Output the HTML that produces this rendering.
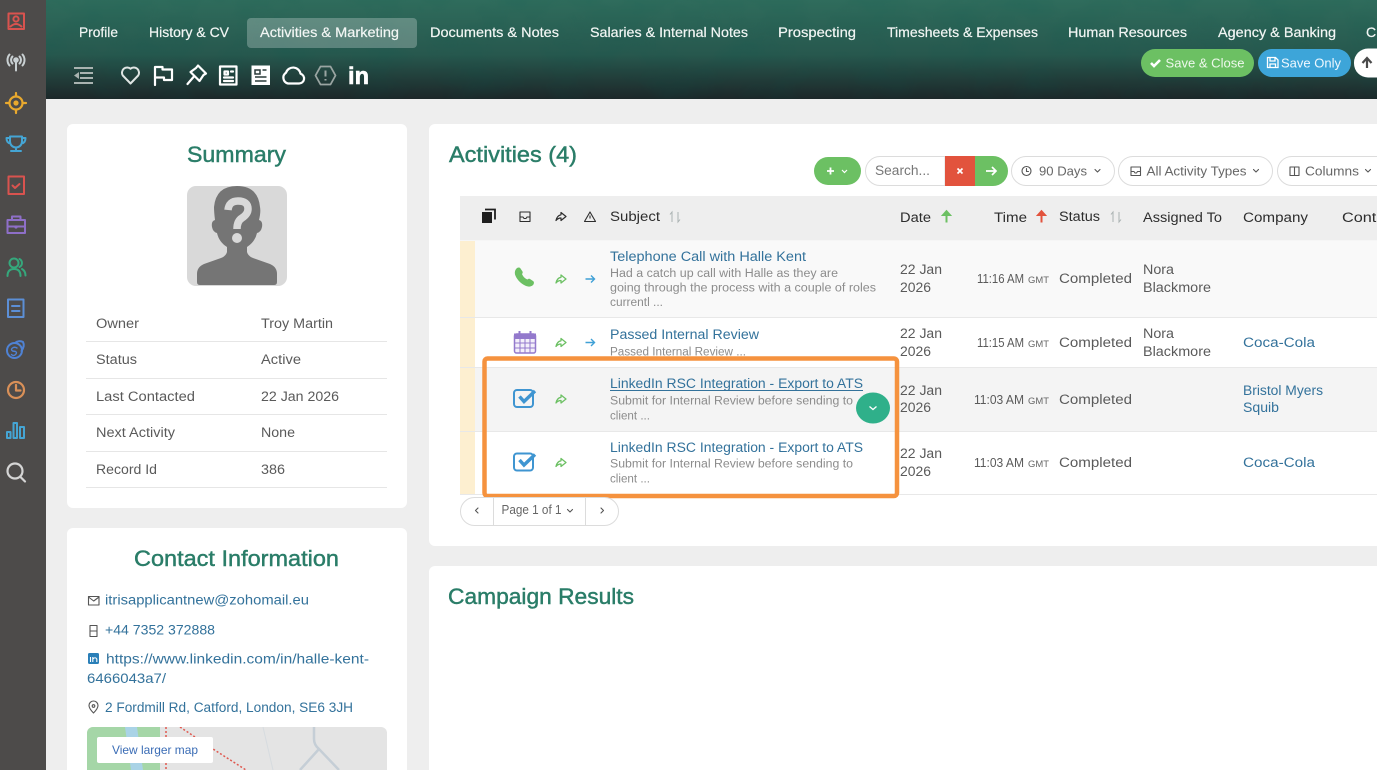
<!DOCTYPE html>
<html lang="en"><head><meta charset="utf-8"><title>Activities</title>
<style>
html,body{margin:0;padding:0;background:#eee;overflow:hidden;width:1377px;height:770px}
svg{display:block;font-family:"Liberation Sans",sans-serif}
.tab{font-size:14px;fill:#f2f6f4;stroke:#f2f6f4;stroke-width:.2}
.lab{font-size:13.5px;fill:#5a5a5a}
.val{font-size:13.5px;fill:#5a5a5a}
.h{font-size:22px;fill:#2a7d68;font-weight:400;stroke:#2a7d68;stroke-width:.45}
.lnk{font-size:13.5px;fill:#33729b}
.sub{font-size:11.5px;fill:#8c8c8c}
.th{font-size:13.5px;fill:#2d2d2d}
.tb{font-size:12.5px;fill:#666}
.tm{font-size:12.5px}
.ic{fill:none;stroke-width:2;stroke-linecap:round;stroke-linejoin:round}
.w{stroke:#fff;fill:none;stroke-width:2.2;stroke-linejoin:round;stroke-linecap:round}
.sg{stroke:#555;fill:none;stroke-width:1.1;stroke-linejoin:round;stroke-linecap:round}
</style></head><body>
<svg width="1377" height="770" viewBox="0 0 1377 770" xmlns="http://www.w3.org/2000/svg">
<defs>
<linearGradient id="hd" x1="0" y1="0" x2="0" y2="1"><stop offset="0" stop-color="#2f6c5c"/><stop offset=".55" stop-color="#27584e"/><stop offset="1" stop-color="#1d2729"/></linearGradient>
<filter id="nz" x="0" y="0" width="100%" height="100%"><feTurbulence type="fractalNoise" baseFrequency=".02 .03" numOctaves="3" seed="4"/><feColorMatrix values="0 0 0 0 0 0 0 0 0 .1 0 0 0 0 .08 0 0 0 1.1 -.42"/></filter>
</defs>
<rect width="1377" height="770" fill="#eeeeee"/>

<!-- header -->
<rect x="46" width="1331" height="99" fill="url(#hd)"/>
<rect x="46" width="1331" height="99" filter="url(#nz)" opacity=".22"/>
<rect x="247" y="18" width="170" height="30" rx="4" fill="#fff" fill-opacity=".25"/>
<g class="tab">
<text x="79" y="37" textLength="39" lengthAdjust="spacingAndGlyphs">Profile</text>
<text x="149" y="37" textLength="80" lengthAdjust="spacingAndGlyphs">History &amp; CV</text>
<text x="260" y="37" textLength="139" lengthAdjust="spacingAndGlyphs">Activities &amp; Marketing</text>
<text x="430" y="37" textLength="129" lengthAdjust="spacingAndGlyphs">Documents &amp; Notes</text>
<text x="590" y="37" textLength="158" lengthAdjust="spacingAndGlyphs">Salaries &amp; Internal Notes</text>
<text x="778" y="37" textLength="78" lengthAdjust="spacingAndGlyphs">Prospecting</text>
<text x="887" y="37" textLength="151" lengthAdjust="spacingAndGlyphs">Timesheets &amp; Expenses</text>
<text x="1068" y="37" textLength="119" lengthAdjust="spacingAndGlyphs">Human Resources</text>
<text x="1218" y="37" textLength="118" lengthAdjust="spacingAndGlyphs">Agency &amp; Banking</text>
<text x="1366" y="37">C</text>
</g>
<!-- toolbar icons -->
<path d="M74 68h19M80 73h13M80 78h13M74 83h19" stroke="#a9b3b0" stroke-width="2" fill="none"/>
<path d="M79 72l-5 3.500 5 3.500z" fill="#a9b3b0"/>
<path d="M130.500 83.500l-7.700-8a5.200 5.200 0 0 1 7.700-6.800 5.200 5.200 0 0 1 7.700 6.800z" fill="none" stroke="#dfe5e3" stroke-width="2" stroke-linejoin="round"/>
<path class="w" d="M155 85V67h7.500v2.500H172V80h-8v-2.500h-9"/>
<path class="w" d="M198 65.500l8 8-2.500 1.500-4 6-9-9 5.500-4zM193.500 77l-6 7"/>
<path class="w" d="M220 66.500h16.500v18H220zM224.500 71.500h3.500v3h-3.500zM231 71.500h2M224 77.500h9M224 81h9"/>
<rect x="251.500" y="65.500" width="18.500" height="19.500" fill="#fff"/>
<path d="M255 70h5v4h-5zM262.500 70h4M255 77h11.500M255 81h11.500" stroke="#2a3b3a" stroke-width="1.500" fill="none"/>
<path class="w" d="M288 83.500h11a5 5 0 0 0 1.500-9.800 7.500 7.500 0 0 0-14.500-1 6 6 0 0 0 2 10.800z"/>
<path d="M320.500 66.500h10l5 9-5 9h-10l-5-9z" fill="none" stroke="#9aa5a2" stroke-width="1.800" stroke-linejoin="round"/>
<path d="M325.500 70.500v6M325.500 79v1.500" stroke="#9aa5a2" stroke-width="2"/>
<text x="348" y="84" font-size="24" font-weight="700" fill="#fff" stroke="#fff" stroke-width=".6" textLength="21" lengthAdjust="spacingAndGlyphs">in</text>
<!-- save buttons -->
<rect x="1141" y="49" width="113" height="28" rx="14" fill="#6cc063"/>
<path d="M1151 63l3 3 6-6" stroke="#fff" stroke-width="2.600" fill="none"/>
<text x="1165.500" y="67.500" font-size="13" fill="#eef8ec" textLength="79" lengthAdjust="spacingAndGlyphs">Save &amp; Close</text>
<rect x="1258" y="49" width="93" height="28" rx="14" fill="#3da5d9"/>
<path d="M1267.500 57.500h8l2.500 2.500v7.500h-10.500zM1270 57.500v3.500h5v-3.500M1270 67.500v-3.500h5.500v3.500" fill="none" stroke="#fff" stroke-width="1.300"/>
<text x="1281" y="67.500" font-size="13" fill="#eef8ff" textLength="60" lengthAdjust="spacingAndGlyphs">Save Only</text>
<rect x="1354" y="48.500" width="40" height="29" rx="14" fill="#fff"/>
<path d="M1367 68v-10M1362.500 63l4.500-5 4.500 5" stroke="#4a4a4a" stroke-width="2.200" fill="none"/>

<!-- sidebar -->
<rect width="46" height="770" fill="#4d4b4a"/>
<g class="ic">
<g stroke="#d9534f"><rect x="8.500" y="13.500" width="15.500" height="15.500"/><circle cx="16" cy="19" r="2.600"/><path d="M10.500 26.500q5.500-5 11 0"/></g>
<g stroke="#c9d0d2"><circle cx="16" cy="60" r="1.800" fill="#c9d0d2"/><path d="M16 62v8.500M12.500 56.500a5 5 0 0 0 0 7M19.500 56.500a5 5 0 0 1 0 7M9.500 54.500a8.500 8.500 0 0 0 0 11M22.500 54.500a8.500 8.500 0 0 1 0 11"/></g>
<g stroke="#e9a92e" stroke-width="2.200"><circle cx="16" cy="103" r="6.500"/><circle cx="16" cy="103" r="1.500" fill="#e9a92e"/><path d="M16 93v3M16 110v3M6 103h3M23 103h3"/></g>
<g stroke="#45a5d4"><path d="M10 136.500h12v5a6 6 0 0 1-12 0zM10 138H6.500q0 5 4 5.500M22 138h3.500q0 5-4 5.500M16 147.500v2.500M11 151h10"/></g>
<g stroke="#d9534f"><rect x="8.500" y="176.500" width="15.500" height="17.500"/><path d="M12.500 185.500l2.500 2.500 4.500-4"/></g>
<g stroke="#8e6fc8"><rect x="7.500" y="220" width="17.500" height="13"/><path d="M12 220v-3.500h8.500v3.500M7.500 226.500h17.500"/><circle cx="16" cy="227" r=".6"/></g>
<g stroke="#35a87c"><circle cx="14" cy="263" r="4.500"/><path d="M7.500 276q0-7 6.500-7t6.500 7M19.500 259a4.500 4.500 0 0 1 0 8M22 269q3.500 2 3.500 6.500"/></g>
<g stroke="#5c8fd6"><rect x="8" y="299.500" width="15.500" height="17.500"/><path d="M12 306h7.500M12 311h7.500"/></g>
<g stroke="#4f82d4"><circle cx="14.500" cy="350.500" r="7.500"/><path d="M15 343a7 7 0 0 1 8-1q2 4-1.500 9"/><path stroke-width="1.400" d="M17 348q-2.500-1.500-4.500 0t0 3l3 .5q2 1 0 3t-4 0"/></g>
<g stroke="#d99058" stroke-width="2.200"><circle cx="16" cy="390" r="8"/><path d="M16 385v5.500h4.500"/></g>
<g stroke="#45a5d4"><rect x="7" y="432" width="3.500" height="6"/><rect x="13.500" y="423" width="3.500" height="15"/><rect x="20" y="427" width="4" height="11"/></g>
<g stroke="#d5d5d5" stroke-width="2.200"><circle cx="15" cy="471" r="7.500"/><path d="M20.500 477l4.500 4.500"/></g>
</g>

<!-- left cards -->
<rect x="67" y="124" width="340" height="384" rx="6" fill="#fff"/>
<text class="h" x="187" y="162" textLength="99" lengthAdjust="spacingAndGlyphs">Summary</text>
<rect x="187" y="186" width="100" height="100" rx="9" fill="#d9d9d9"/>
<path d="M200 285q-3 0-3-3v-8q0-7 7-10l17-6q5-2 6-6v-5q-8-5-10-14q-4-1-5-6q-1-6 3-7q-1-8-1-13q2-21 23-21t23 21q1 5-1 13q4 1 3 7q-1 5-5 6q-2 9-10 14v5q1 4 6 6l17 6q7 3 7 10v8q0 3-3 3z" fill="#757575"/>
<path d="M228 210q1-9 10-9q10 0 10 8q0 5-6 9q-5 3-5 11" fill="none" stroke="#d9d9d9" stroke-width="7.500"/>
<circle cx="237" cy="238" r="5" fill="#d9d9d9"/>
<g fill="none" stroke="#e6e6e6"><path d="M86 341.500h301M86 378.500h301M86 414.500h301M86 451.500h301M86 487.500h301"/></g>
<text class="lab" x="96" y="328" textLength="43" lengthAdjust="spacingAndGlyphs">Owner</text>
<text class="lab" x="96" y="364" textLength="41" lengthAdjust="spacingAndGlyphs">Status</text>
<text class="lab" x="96" y="401" textLength="99" lengthAdjust="spacingAndGlyphs">Last Contacted</text>
<text class="lab" x="96" y="437" textLength="79" lengthAdjust="spacingAndGlyphs">Next Activity</text>
<text class="lab" x="96" y="474" textLength="61" lengthAdjust="spacingAndGlyphs">Record Id</text>
<text class="val" x="261" y="328" textLength="72" lengthAdjust="spacingAndGlyphs">Troy Martin</text>
<text class="val" x="261" y="364" textLength="40" lengthAdjust="spacingAndGlyphs">Active</text>
<text class="val" x="261" y="401" textLength="78" lengthAdjust="spacingAndGlyphs">22 Jan 2026</text>
<text class="val" x="261" y="437" textLength="34" lengthAdjust="spacingAndGlyphs">None</text>
<text class="val" x="261" y="474" textLength="24" lengthAdjust="spacingAndGlyphs">386</text>

<rect x="67" y="528" width="340" height="260" rx="6" fill="#fff"/>
<text class="h" x="134" y="566" textLength="205" lengthAdjust="spacingAndGlyphs">Contact Information</text>
<rect x="88.500" y="596.500" width="10.500" height="8.500" class="sg" />
<path class="sg" d="M88.500 597l5.200 4 5.300-4"/>
<text class="lnk" x="105" y="604.500" textLength="204" lengthAdjust="spacingAndGlyphs">itrisapplicantnew@zohomail.eu</text>
<path class="sg" d="M90 625.500h7v11h-7zM90 631h7"/>
<text class="lnk" x="105" y="634.500" textLength="110" lengthAdjust="spacingAndGlyphs">+44 7352 372888</text>
<rect x="88" y="653" width="11" height="11" rx="1.500" fill="#2a7fb8"/>
<path d="M90.500 657v5M92.800 662v-5M92.800 659q2.500-2.500 4 0v3" stroke="#fff" stroke-width="1.100" fill="none"/>
<text class="lnk" x="106" y="663.500" textLength="263" lengthAdjust="spacingAndGlyphs">https://www.linkedin.com/in/halle-kent-</text>
<text class="lnk" x="87" y="683" textLength="79" lengthAdjust="spacingAndGlyphs">6466043a7/</text>
<path class="sg" d="M93.500 713q-4.500-4.500-4.500-7.500a4.500 4.500 0 0 1 9 0q0 3-4.500 7.500z"/>
<circle cx="93.500" cy="706" r="1.300" class="sg"/>
<text class="lnk" x="105" y="712" textLength="248" lengthAdjust="spacingAndGlyphs">2 Fordmill Rd, Catford, London, SE6 3JH</text>
<clipPath id="mp"><path d="M87 770v-37a6 6 0 0 1 6-6h288a6 6 0 0 1 6 6v37z"/></clipPath>
<g clip-path="url(#mp)">
<rect x="87" y="727" width="300" height="43" fill="#e4e4e4"/>
<path d="M87 727h73v43H87z" fill="#a5d6a7"/>
<path d="M125 727l6 43h12l-6-43z" fill="#a9d3e6"/>
<path d="M166 727v43M180 727l33 22 33 21" stroke="#e0584f" stroke-width="1.500" stroke-dasharray="2 2" fill="none"/>
<path d="M263 727l10 43" stroke="#d6dbdf" stroke-width="1" fill="none"/>
<path d="M314 727v12q0 6 5 10l20 21M300 770l19-21" stroke="#c5ced6" stroke-width="2.500" fill="none"/>
</g>
<rect x="97" y="737" width="116" height="26" rx="2" fill="#fff"/>
<text x="112" y="754" font-size="12" fill="#3a6cb5" textLength="86" lengthAdjust="spacingAndGlyphs">View larger map</text>

<!-- activities card -->
<rect x="429" y="124" width="960" height="422" rx="6" fill="#fff"/>
<text class="h" x="449" y="162" textLength="128" lengthAdjust="spacingAndGlyphs">Activities (4)</text>
<!-- toolbar -->
<rect x="814" y="157" width="47" height="28" rx="14" fill="#6cc063"/>
<path d="M827 171h7M830.500 167.500v7" stroke="#fff" stroke-width="1.800"/>
<path d="M842 170l2.500 2.500 2.500-2.500" stroke="#fff" stroke-width="1.200" fill="none"/>
<path d="M945 156.500h-65a14.500 14.500 0 0 0 0 29h65z" fill="#fff" stroke="#dcdcdc"/>
<text x="875" y="175" textLength="55" lengthAdjust="spacingAndGlyphs" style="font-size:13.500px;fill:#777">Search...</text>
<rect x="945" y="156" width="30" height="30" fill="#e2533d"/>
<path d="M957.500 168.500l5 5M962.500 168.500l-5 5" stroke="#fff" stroke-width="1.700"/>
<path d="M975 156h18a15 15 0 0 1 0 30h-18z" fill="#6cc063"/>
<path d="M986 171h10M992 167l4 4-4 4" stroke="#fff" stroke-width="1.700" fill="none"/>
<rect x="1011.500" y="156.500" width="103" height="29" rx="14.500" fill="#fff" stroke="#dcdcdc"/>
<circle cx="1026.500" cy="171" r="4.500" class="sg"/><path class="sg" d="M1026.500 168.500v3h2"/>
<text class="tb" x="1039" y="175.500" textLength="48" lengthAdjust="spacingAndGlyphs">90 Days</text>
<path class="sg" d="M1095 169.500l2.500 2.500 2.500-2.500"/>
<rect x="1118.500" y="156.500" width="154" height="29" rx="14.500" fill="#fff" stroke="#dcdcdc"/>
<path class="sg" d="M1131 167h9.500v8.500H1131zM1131 171.500h3l1 1.500h1.500l1-1.500h3"/>
<text class="tb" x="1146.500" y="175.500" textLength="100" lengthAdjust="spacingAndGlyphs">All Activity Types</text>
<path class="sg" d="M1253.500 169.500l2.500 2.500 2.500-2.500"/>
<rect x="1277.500" y="156.500" width="130" height="29" rx="14.500" fill="#fff" stroke="#dcdcdc"/>
<path class="sg" d="M1290 167h9v8.500h-9zM1294.500 167v8.500"/>
<text class="tb" x="1305" y="175.500" textLength="54" lengthAdjust="spacingAndGlyphs">Columns</text>
<path class="sg" d="M1365.500 169.500l2.500 2.500 2.500-2.500"/>

<!-- table -->
<rect x="460" y="196" width="917" height="44.500" fill="#eeeeee"/>
<rect x="460" y="241" width="15" height="253" fill="#fdefd0"/>
<rect x="475" y="241" width="902" height="76" fill="#f9f9f9"/>
<rect x="475" y="367" width="902" height="64" fill="#f4f4f4"/>
<path d="M460 317.500h917M460 367.500h917M460 431.500h917M460 494.500h917" stroke="#e8e8e8"/>
<!-- header icons -->
<path d="M482 212h10v11h-10z" fill="#1f1f1f"/>
<path d="M485 209.500h10v10" fill="none" stroke="#1f1f1f" stroke-width="1.800"/>
<path class="sg" style="stroke:#2d2d2d" d="M520 212h10v9.500h-10zM520 217h3l1 1.500h2l1-1.500h3"/>
<path d="M566 216.500l-5-4v2.300q-4 .7-5 5.700q2-2.500 5-2.500v2.500z" fill="none" stroke="#2d2d2d" stroke-width="1.200" stroke-linejoin="round"/>
<path d="M590 212l5.500 9.500h-11zM590 215.500v3" fill="none" stroke="#2d2d2d" stroke-width="1.100" stroke-linejoin="round"/>
<g class="th">
<text x="610" y="221" textLength="50" lengthAdjust="spacingAndGlyphs">Subject</text>
<text x="900" y="222" textLength="31" lengthAdjust="spacingAndGlyphs">Date</text>
<text x="994" y="222" textLength="33" lengthAdjust="spacingAndGlyphs">Time</text>
<text x="1059" y="221" textLength="41" lengthAdjust="spacingAndGlyphs">Status</text>
<text x="1143" y="222" textLength="79" lengthAdjust="spacingAndGlyphs">Assigned To</text>
<text x="1243" y="222" textLength="65" lengthAdjust="spacingAndGlyphs">Company</text>
<text x="1342" y="222" textLength="56" lengthAdjust="spacingAndGlyphs">Contact</text>
</g>
<path d="M672 222v-10l-2 2.500M678 212v10l2-2.500M1113 222v-10l-2 2.500M1119 212v10l2-2.500" stroke="#aab2b2" stroke-width="1" fill="none"/>
<path d="M946 222v-6.500h-4l4.500-5 4.500 5h-4v6.500z" fill="#6cc063" stroke="#6cc063"/>
<path d="M1041 222v-6.500h-4l4.500-5 4.500 5h-4v6.500z" fill="#e2533d" stroke="#e2533d"/>

<!-- row icons -->
<path d="M516.500 268.500c1-1 3-1.500 4 0l2 3c.5 1 0 2-.5 2.500 1 2.500 3 4.500 5.500 5.500.7-.7 1.500-1 2.500-.5l3 2c1.500 1 1 3 0 4-2 2-5 2-8 .5-5-2.500-8.500-6.500-10-11-.5-2.500 0-4.500 1.500-6z" fill="#6cc063"/>
<g fill="none" stroke="#9379cc"><rect x="514.500" y="334" width="21" height="19" rx="2" fill="#f3effa" stroke-width="1.500"/><path d="M514.500 334h21v4.500h-21z" fill="#9379cc"/><path d="M519.500 331v4M530.500 331v4" stroke-width="2"/><path d="M514.500 343h21M514.500 348h21M520 338v15M525 338v15M530 338v15" stroke-width="1"/></g>
<g><rect x="514" y="390" width="19" height="17" rx="3" fill="none" stroke="#3f95d1" stroke-width="2"/><path d="M519.500 396.500l4.500 5 11-10.500" fill="none" stroke="#3f95d1" stroke-width="3.400"/></g>
<g transform="translate(0,63.500)"><rect x="514" y="390" width="19" height="17" rx="3" fill="none" stroke="#3f95d1" stroke-width="2"/><path d="M519.500 396.500l4.500 5 11-10.500" fill="none" stroke="#3f95d1" stroke-width="3.400"/></g>
<g fill="none" stroke="#6cc063" stroke-width="1.300" stroke-linejoin="round">
<path d="M566 279l-5-4v2.300q-4 .7-5 5.700q2-2.500 5-2.500v2.500z"/>
<path d="M566 342.500l-5-4v2.300q-4 .7-5 5.700q2-2.500 5-2.500v2.500z"/>
<path d="M566 399l-5-4v2.300q-4 .7-5 5.700q2-2.500 5-2.500v2.500z"/>
<path d="M566 462.500l-5-4v2.300q-4 .7-5 5.700q2-2.500 5-2.500v2.500z"/>
</g>
<path d="M585.500 279h9M591 275.500l3.500 3.500-3.500 3.500M585.500 342.500h9M591 339l3.500 3.500-3.500 3.500" fill="none" stroke="#3fa0d6" stroke-width="1.400"/>

<!-- row 1 -->
<text class="lnk" x="610" y="261" textLength="196" lengthAdjust="spacingAndGlyphs">Telephone Call with Halle Kent</text>
<text class="sub" x="610" y="277" textLength="228" lengthAdjust="spacingAndGlyphs">Had a catch up call with Halle as they are</text>
<text class="sub" x="610" y="291.500" textLength="266" lengthAdjust="spacingAndGlyphs">going through the process with a couple of roles</text>
<text class="sub" x="610" y="306" textLength="53" lengthAdjust="spacingAndGlyphs">currentl ...</text>
<!-- row 2 -->
<text class="lnk" x="610" y="339" textLength="149" lengthAdjust="spacingAndGlyphs">Passed Internal Review</text>
<text class="sub" x="610" y="355.500" textLength="136" lengthAdjust="spacingAndGlyphs">Passed Internal Review ...</text>
<!-- row 3 -->
<text class="lnk" x="610" y="388" textLength="253" lengthAdjust="spacingAndGlyphs">LinkedIn RSC Integration - Export to ATS</text>
<path d="M610 390.500h253" stroke="#33729b" stroke-width="1"/>
<text class="sub" x="610" y="404.500" textLength="243" lengthAdjust="spacingAndGlyphs">Submit for Internal Review before sending to</text>
<text class="sub" x="610" y="419.500" textLength="40" lengthAdjust="spacingAndGlyphs">client ...</text>
<!-- row 4 -->
<text class="lnk" x="610" y="452" textLength="253" lengthAdjust="spacingAndGlyphs">LinkedIn RSC Integration - Export to ATS</text>
<text class="sub" x="610" y="467.500" textLength="243" lengthAdjust="spacingAndGlyphs">Submit for Internal Review before sending to</text>
<text class="sub" x="610" y="482.500" textLength="40" lengthAdjust="spacingAndGlyphs">client ...</text>

<g class="val">
<text x="900" y="274" textLength="42" lengthAdjust="spacingAndGlyphs">22 Jan</text><text x="900" y="292" textLength="31" lengthAdjust="spacingAndGlyphs">2026</text>
<text x="900" y="338" textLength="42" lengthAdjust="spacingAndGlyphs">22 Jan</text><text x="900" y="356" textLength="31" lengthAdjust="spacingAndGlyphs">2026</text>
<text x="900" y="395" textLength="42" lengthAdjust="spacingAndGlyphs">22 Jan</text><text x="900" y="412" textLength="31" lengthAdjust="spacingAndGlyphs">2026</text>
<text x="900" y="458" textLength="42" lengthAdjust="spacingAndGlyphs">22 Jan</text><text x="900" y="476" textLength="31" lengthAdjust="spacingAndGlyphs">2026</text>
<text class="tm" x="977" y="283" textLength="47" lengthAdjust="spacingAndGlyphs">11:16 AM</text>
<text class="tm" x="977" y="347" textLength="47" lengthAdjust="spacingAndGlyphs">11:15 AM</text>
<text class="tm" x="974" y="404" textLength="50" lengthAdjust="spacingAndGlyphs">11:03 AM</text>
<text class="tm" x="974" y="467" textLength="50" lengthAdjust="spacingAndGlyphs">11:03 AM</text>
<text x="1059" y="283" textLength="73" lengthAdjust="spacingAndGlyphs">Completed</text>
<text x="1059" y="347" textLength="73" lengthAdjust="spacingAndGlyphs">Completed</text>
<text x="1059" y="404" textLength="73" lengthAdjust="spacingAndGlyphs">Completed</text>
<text x="1059" y="467" textLength="73" lengthAdjust="spacingAndGlyphs">Completed</text>
<text x="1143" y="274" textLength="31" lengthAdjust="spacingAndGlyphs">Nora</text><text x="1143" y="292" textLength="68" lengthAdjust="spacingAndGlyphs">Blackmore</text>
<text x="1143" y="338" textLength="31" lengthAdjust="spacingAndGlyphs">Nora</text><text x="1143" y="356" textLength="68" lengthAdjust="spacingAndGlyphs">Blackmore</text>
</g>
<g font-size="9.500" fill="#666">
<text x="1028" y="283" textLength="21" lengthAdjust="spacingAndGlyphs">GMT</text>
<text x="1028" y="347" textLength="21" lengthAdjust="spacingAndGlyphs">GMT</text>
<text x="1028" y="404" textLength="21" lengthAdjust="spacingAndGlyphs">GMT</text>
<text x="1028" y="467" textLength="21" lengthAdjust="spacingAndGlyphs">GMT</text>
</g>
<text class="lnk" x="1243" y="347" textLength="72" lengthAdjust="spacingAndGlyphs">Coca-Cola</text>
<text class="lnk" x="1243" y="395" textLength="80" lengthAdjust="spacingAndGlyphs">Bristol Myers</text>
<text class="lnk" x="1243" y="412" textLength="36" lengthAdjust="spacingAndGlyphs">Squib</text>
<text class="lnk" x="1243" y="467" textLength="72" lengthAdjust="spacingAndGlyphs">Coca-Cola</text>

<!-- highlight -->
<rect x="484.500" y="358.500" width="412.500" height="137.500" rx="3" fill="none" stroke="#f5923e" stroke-width="4.500"/>
<ellipse cx="873" cy="408" rx="17" ry="15.500" fill="#2fb08a"/>
<path d="M869.500 406.500l3.500 3 3.500-3" stroke="#fff" stroke-width="1.300" fill="none"/>

<!-- pagination -->
<rect x="460.500" y="497.500" width="158" height="28" rx="14" fill="#fff" stroke="#dcdcdc"/>
<path d="M493.500 497.500v28M585.500 497.500v28" stroke="#dcdcdc"/>
<path class="sg" d="M478 508l-2.500 2.500 2.500 2.500M601 508l2.500 2.500-2.500 2.500"/>
<text class="tb" x="501.500" y="514" textLength="60" lengthAdjust="spacingAndGlyphs">Page 1 of 1</text>
<path class="sg" d="M567.500 509.500l2.500 2.500 2.500-2.500"/>

<!-- campaign -->
<rect x="429" y="566" width="960" height="220" rx="6" fill="#fff"/>
<text class="h" x="448" y="604" textLength="186" lengthAdjust="spacingAndGlyphs">Campaign Results</text>
</svg>
</body></html>
